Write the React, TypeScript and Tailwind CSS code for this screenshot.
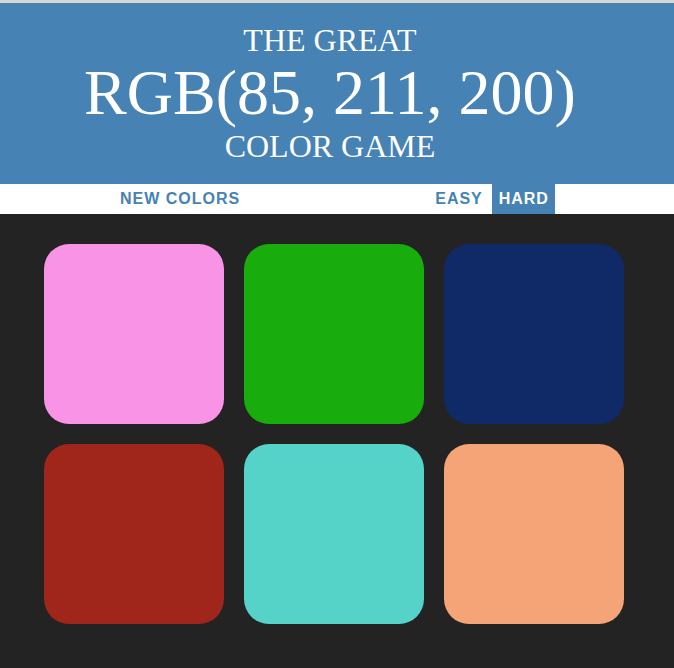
const squares = [
  "#f993e6",
  "#18ad0c",
  "#0f2a66",
  "#a0251b",
  "rgb(85, 211, 200)",
  "#f5a478",
];

export default function App() {
  return (
    <div className="min-h-[668px] bg-[#232323] border-t-[3px] border-[#d6d6d6]">
      <h1 className="bg-[#4682b4] py-[20px] pr-[14px] text-center text-white font-normal leading-[1.1] text-[32px] uppercase font-['Liberation_Serif',serif]">
        The Great
        <span className="block text-[64px]">RGB(85, 211, 200)</span>
        Color Game
      </h1>

      <div className="flex h-[30px] bg-white pl-[114px] font-['Liberation_Sans',Arial,sans-serif] text-[16px] font-bold tracking-[1px]">
        <button className="h-full px-[6px] uppercase text-[#4682b4]">New Colors</button>
        <span className="w-[183px]"></span>
        <button className="h-full px-[6px] uppercase text-[#4682b4]">Easy</button>
        <button className="ml-[3px] h-full w-[63px] pl-[1px] uppercase bg-[#4682b4] text-white">Hard</button>
      </div>

      <div className="grid grid-cols-[repeat(3,180px)] gap-[20px] pl-[44px] pt-[30px] pb-[44px]">
        {squares.map((c, i) => (
          <div key={i} className="h-[180px] rounded-[25px]" style={{ background: c }} />
        ))}
      </div>
    </div>
  );
}
